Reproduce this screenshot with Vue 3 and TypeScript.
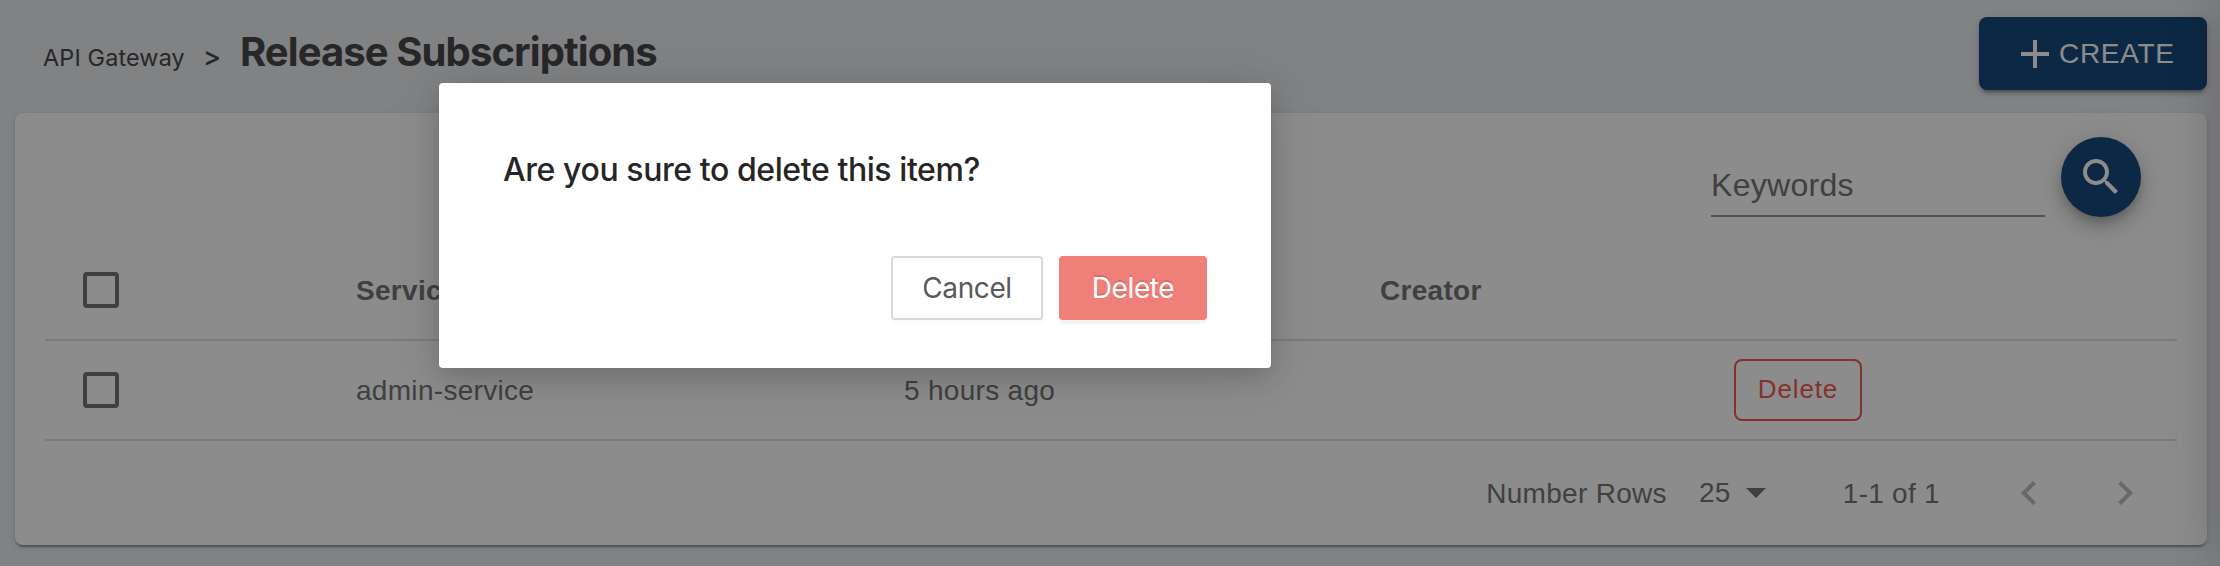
<script setup lang="ts">
import { ref } from 'vue'

interface Subscription {
  service: string
  published: string
  creator: string
}

const keywords = ref('')
const rows = ref<Subscription[]>([
  { service: 'admin-service', published: '5 hours ago', creator: '' },
])
</script>

<template>
  <div class="page">
    <header class="topbar">
      <nav class="crumbs">
        <span class="crumb">API Gateway</span>
        <span class="sep">&gt;</span>
        <h1>Release Subscriptions</h1>
      </nav>
      <button class="create">
        <svg width="28" height="28" viewBox="0 0 28 28"><path d="M12 0h4v12h12v4H16v12h-4V16H0v-4h12z" fill="currentColor" /></svg>
        <span>CREATE</span>
      </button>
    </header>

    <main class="card">
      <div class="search">
        <input v-model="keywords" placeholder="Keywords" />
        <button class="fab" aria-label="Search">
          <svg width="48" height="48" viewBox="0 0 24 24"><path fill="currentColor" d="M15.5 14h-.79l-.28-.27C15.41 12.59 16 11.11 16 9.5 16 5.91 13.09 3 9.5 3S3 5.91 3 9.5 5.91 16 9.5 16c1.61 0 3.09-.59 4.23-1.57l.27.28v.79l5 4.99L20.49 19l-4.99-5zm-6 0C7.01 14 5 11.99 5 9.5S7.01 5 9.5 5 14 7.01 14 9.5 11.99 14 9.5 14z" /></svg>
        </button>
      </div>

      <div class="row head">
        <span class="check"></span>
        <span class="cell">Service</span>
        <span class="cell"></span>
        <span class="cell">Creator</span>
        <span></span>
      </div>
      <div v-for="row in rows" :key="row.service" class="row">
        <span class="check"></span>
        <span class="cell">{{ row.service }}</span>
        <span class="cell">{{ row.published }}</span>
        <span class="cell">{{ row.creator }}</span>
        <span><button class="remove">Delete</button></span>
      </div>

      <footer class="pager">
        <span class="label">Number Rows</span>
        <span class="size">25</span>
        <svg class="caret" width="20" height="10" viewBox="0 0 20 10"><path d="M0 0h20L10 10z" fill="currentColor" /></svg>
        <span class="range">1-1 of 1</span>
        <svg class="arrow" width="48" height="48" viewBox="0 0 24 24"><path fill="currentColor" d="M15.41 16.59L10.83 12l4.58-4.59L14 6l-6 6 6 6z" /></svg>
        <svg class="arrow" width="48" height="48" viewBox="0 0 24 24"><path fill="currentColor" d="M8.59 16.59L13.17 12 8.59 7.41 10 6l6 6-6 6z" /></svg>
      </footer>
    </main>

    <div class="drawer-edge"></div>
    <div class="mask">
      <section class="modal" role="dialog">
        <p>Are you sure to delete this item?</p>
        <div class="actions">
          <button class="cancel">Cancel</button>
          <button class="danger">Delete</button>
        </div>
      </section>
    </div>
  </div>
</template>

<style>
body {
  margin: 0;
  overflow: hidden;
}
</style>

<style scoped>
.page {
  position: relative;
  box-sizing: border-box;
  height: 566px;
  padding: 17px 13px 21px 15px;
  overflow: hidden;
  background: #ebedf0;
  font-family: 'Liberation Sans', Arial, sans-serif;
}
button {
  box-sizing: border-box;
  padding: 0;
  border: 0;
  font-family: inherit;
}
.topbar {
  display: flex;
  justify-content: space-between;
  height: 96px;
}
.crumbs {
  display: flex;
  align-items: baseline;
  height: 60px;
  padding: 1px 0 0 28px;
  color: #484848;
  font-family: Inter, sans-serif;
}
.crumb {
  font-size: 23.4px;
  letter-spacing: 0.15px;
}
.sep {
  margin: 0 19px 0 18px;
  font-size: 27px;
  font-weight: 500;
}
h1 {
  margin: 0;
  font-size: 40px;
  font-weight: 700;
  line-height: 68px;
  letter-spacing: -0.9px;
}
.create {
  display: flex;
  align-items: center;
  gap: 10px;
  width: 228px;
  height: 73px;
  padding-left: 42px;
  border-radius: 8px;
  background: #18497d;
  color: #fff;
  font-size: 28px;
  letter-spacing: 0.7px;
  box-shadow: 0 6px 2px -4px rgba(0, 0, 0, 0.2), 0 4px 4px rgba(0, 0, 0, 0.14), 0 2px 10px rgba(0, 0, 0, 0.12);
}
.card {
  box-sizing: border-box;
  height: 432px;
  padding: 24px 30px 0;
  border-radius: 8px;
  background: #fff;
  color: #757575;
  font-size: 28px;
  letter-spacing: 0.3px;
  box-shadow: 0 4px 2px -2px rgba(0, 0, 0, 0.2), 0 2px 2px rgba(0, 0, 0, 0.14), 0 2px 6px rgba(0, 0, 0, 0.12);
}
.search {
  display: flex;
  justify-content: flex-end;
  gap: 16px;
  height: 104px;
  padding-right: 36px;
}
.search input {
  box-sizing: border-box;
  width: 334px;
  height: 80px;
  padding: 18px 0 0;
  border: 0;
  border-bottom: 2px solid #949494;
  outline: 0;
  background: none;
  font: 32px 'Liberation Sans', Arial, sans-serif;
  letter-spacing: 0.3px;
}
.search input::placeholder {
  color: #757575;
  opacity: 1;
}
.fab {
  display: flex;
  align-items: center;
  justify-content: center;
  width: 80px;
  height: 80px;
  border-radius: 50%;
  background: #18497d;
  color: #fff;
  box-shadow: 0 6px 10px -2px rgba(0, 0, 0, 0.2), 0 12px 20px rgba(0, 0, 0, 0.14), 0 2px 36px rgba(0, 0, 0, 0.12);
}
.row {
  box-sizing: border-box;
  display: grid;
  grid-template-columns: 273px 548px 476px 354px 1fr;
  align-items: center;
  height: 100px;
  padding-left: 38px;
  border-bottom: 2px solid #e0e0e0;
}
.cell {
  padding-top: 2px;
}
.head {
  font-weight: 700;
}
.check {
  box-sizing: border-box;
  width: 36px;
  height: 36px;
  border: 4px solid #757575;
  border-radius: 4px;
}
.remove {
  display: block;
  width: 128px;
  height: 62px;
  padding-bottom: 2px;
  border: 2px solid #f05a54;
  border-radius: 8px;
  background: none;
  color: #f05a54;
  font-size: 26px;
  letter-spacing: 0.85px;
}
.pager {
  display: flex;
  align-items: center;
  justify-content: flex-end;
  height: 104px;
  padding-right: 28px;
}
.label,
.range {
  padding-top: 2px;
}
.size {
  margin: -1px 15px 0 32px;
}
.range {
  margin: 0 65px 0 77px;
}
.arrow {
  color: #bdbdbd;
}
.arrow + .arrow {
  margin-left: 48px;
}
.drawer-edge {
  position: absolute;
  inset: 0 -20px 0 auto;
  width: 20px;
  box-shadow: 0 0 50px rgba(0, 0, 0, 0.35);
}
.mask {
  position: absolute;
  inset: 0;
  box-sizing: border-box;
  padding: 83px 0 0 439px;
  background: rgba(0, 0, 0, 0.45);
}
.modal {
  box-sizing: border-box;
  display: flex;
  flex-direction: column;
  justify-content: space-between;
  width: 832px;
  height: 285px;
  padding: 65px 64px 48px;
  border-radius: 4px;
  background: #fff;
  font-family: Inter, sans-serif;
  box-shadow: 0 8px 24px rgba(0, 0, 0, 0.15), 0 8px 60px rgba(0, 0, 0, 0.1);
}
.modal p {
  margin: 0;
  color: #262626;
  font-size: 32px;
  font-weight: 500;
  line-height: 44px;
  letter-spacing: -0.42px;
}
.actions {
  display: flex;
  justify-content: flex-end;
  gap: 16px;
}
.actions button {
  height: 64px;
  border-radius: 4px;
  font-size: 28px;
  letter-spacing: -0.4px;
}
.actions .cancel {
  width: 152px;
  border: 2px solid #d9d9d9;
  background: #fff;
  color: #595959;
  box-shadow: 0 4px 0 rgba(0, 0, 0, 0.016);
}
.actions .danger {
  width: 148px;
  background: #ef7f79;
  color: #fff;
  text-shadow: 0 -2px 0 rgba(0, 0, 0, 0.12);
  box-shadow: 0 4px 0 rgba(0, 0, 0, 0.045);
}
</style>
